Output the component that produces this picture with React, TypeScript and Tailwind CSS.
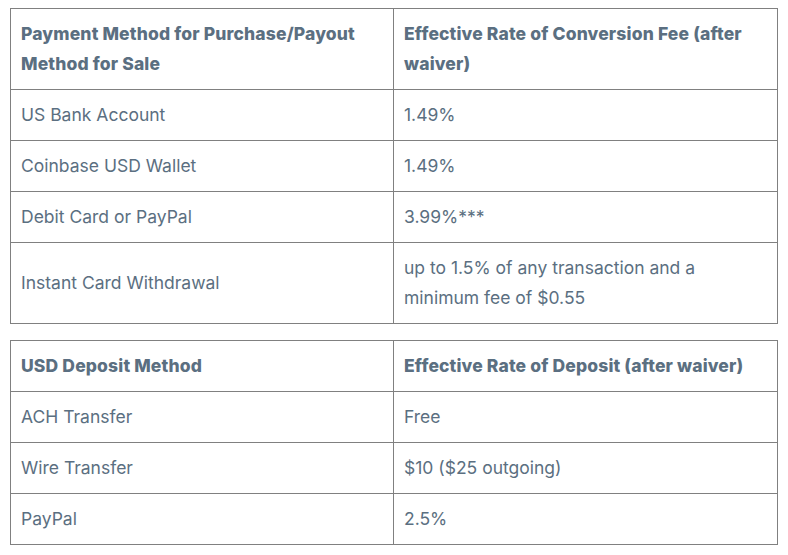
import React from "react";

type Row = [string, string];

const conversion: Row[] = [
  ["US Bank Account", "1.49%"],
  ["Coinbase USD Wallet", "1.49%"],
  ["Debit Card or PayPal", "3.99%***"],
  ["Instant Card Withdrawal", "up to 1.5% of any transaction and a minimum fee of $0.55"],
];

const deposit: Row[] = [
  ["ACH Transfer", "Free"],
  ["Wire Transfer", "$10 ($25 outgoing)"],
  ["PayPal", "2.5%"],
];

function FeeTable({ head, rows }: { head: Row; rows: Row[] }) {
  return (
    <table className="w-[768px] table-fixed border-collapse border border-[#808080]">
      <colgroup>
        <col className="w-[383px]" />
        <col />
      </colgroup>
      <thead>
        <tr>
          {head.map((h) => (
            <th
              key={h}
              className="border border-[#808080] px-[10px] py-[10px] text-left align-middle font-extrabold tracking-[0.15px]"
            >
              {h}
            </th>
          ))}
        </tr>
      </thead>
      <tbody>
        {rows.map(([a, b]) => (
          <tr key={a}>
            <td className="border border-[#808080] px-[10px] py-[10px] align-middle">{a}</td>
            <td className="border border-[#808080] px-[10px] py-[10px] align-middle">{b}</td>
          </tr>
        ))}
      </tbody>
    </table>
  );
}

export default function App() {
  return (
    <main
      className="min-h-[555px] bg-white pl-[10px] pt-[8px] text-[17.5px] leading-[30px] text-[#5b6f81]"
      style={{ fontFamily: "Inter, 'Noto Sans', sans-serif" }}
    >
      <div className="flex flex-col gap-[16px]">
        <FeeTable
          head={["Payment Method for Purchase/Payout Method for Sale", "Effective Rate of Conversion Fee (after waiver)"]}
          rows={conversion}
        />
        <FeeTable head={["USD Deposit Method", "Effective Rate of Deposit (after waiver)"]} rows={deposit} />
      </div>
    </main>
  );
}
